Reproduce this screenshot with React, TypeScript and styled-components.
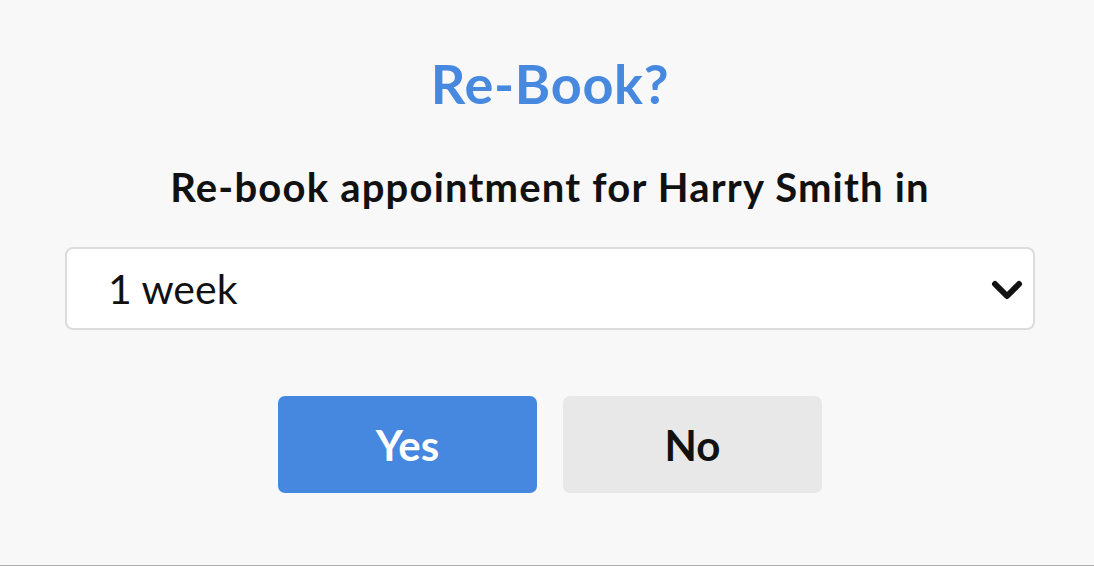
import styled, { createGlobalStyle } from "styled-components";

const GlobalStyle = createGlobalStyle`
  html, body {
    margin: 0;
    padding: 0;
    background: #f8f8f8;
  }
  * {
    box-sizing: border-box;
  }
`;

const Page = styled.div`
  width: 1094px;
  height: 566px;
  background-color: #f8f8f8;
  border-bottom: 1px solid #adadad;
  font-family: Lato, "Open Sans", sans-serif;
  display: flex;
  flex-direction: column;
  align-items: center;
  padding: 52px 59px 0 65px;
`;

const Title = styled.h1`
  margin: 0;
  font-size: 54px;
  line-height: 64px;
  letter-spacing: 0.7px;
  font-weight: 700;
  color: #4889e0;
`;

const Prompt = styled.p`
  margin: 45px 0 0;
  font-size: 40px;
  line-height: 52px;
  letter-spacing: 1.2px;
  font-weight: 700;
  color: #111;
`;

const SelectBox = styled.div`
  margin-top: 34px;
  width: 970px;
  height: 83px;
  background-color: #fff;
  border: 2px solid #dcdcdc;
  border-radius: 8px;
  display: flex;
  align-items: center;
  justify-content: space-between;
  padding: 0 10px 0 41px;
  font-size: 41px;
  color: #111;

  svg {
    margin-top: 5px;
  }
`;

const Buttons = styled.div`
  margin-top: 66px;
  display: flex;
  gap: 26px;
`;

const Button = styled.button<{ $primary?: boolean }>`
  width: 259px;
  height: 97px;
  border: none;
  border-radius: 7px;
  font-family: inherit;
  font-size: 42px;
  font-weight: 700;
  background-color: ${(p) => (p.$primary ? "#4688e0" : "#e8e8e8")};
  color: ${(p) => (p.$primary ? "#fff" : "#111")};
`;

const Chevron = () => (
  <svg width="32" height="22" viewBox="0 0 32 22">
    <path
      d="M4 4 L16 16 L28 4"
      fill="none"
      stroke="#111"
      strokeWidth="6"
      strokeLinecap="round"
      strokeLinejoin="round"
    />
  </svg>
);

export default function App() {
  return (
    <>
      <GlobalStyle />
      <Page>
        <Title>Re-Book?</Title>
        <Prompt>Re-book appointment for Harry Smith in</Prompt>
        <SelectBox>
          <span>1 week</span>
          <Chevron />
        </SelectBox>
        <Buttons>
          <Button $primary>Yes</Button>
          <Button>No</Button>
        </Buttons>
      </Page>
    </>
  );
}
